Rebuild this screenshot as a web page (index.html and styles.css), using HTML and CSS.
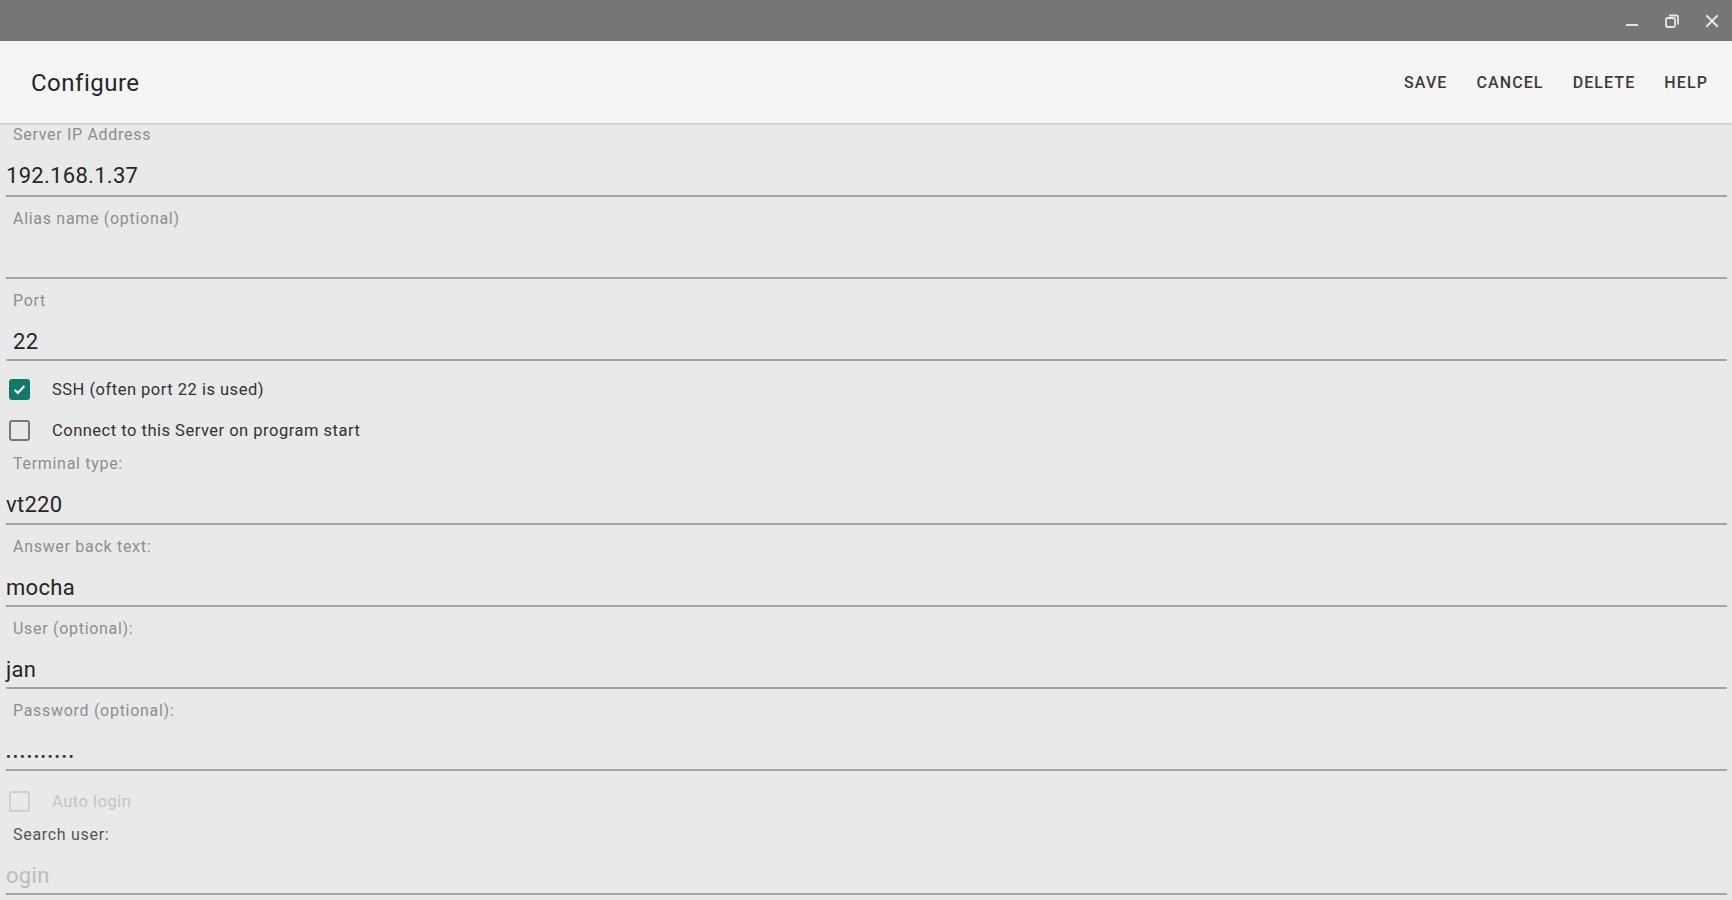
FILE: index.html
```html
<!DOCTYPE html>
<html>
<head>
<meta charset="utf-8">
<title>Configure</title>
<link rel="stylesheet" href="styles.css">
</head>
<body>
<div class="window">
  <div class="titlebar">
    <div class="winbtn">
      <svg width="16" height="16" viewBox="0 0 16 16"><rect x="2" y="11" width="12" height="2" fill="#e6e6e6"/></svg>
    </div>
    <div class="winbtn">
      <svg width="18" height="18" viewBox="0 0 18 18"><path d="M6 3.5h7.5a1.5 1.5 0 0 1 1.5 1.5v7.5" fill="none" stroke="#e6e6e6" stroke-width="1.8"/><rect x="3" y="6" width="9" height="9" rx="1.5" fill="none" stroke="#e6e6e6" stroke-width="1.8"/></svg>
    </div>
    <div class="winbtn">
      <svg width="16" height="16" viewBox="0 0 16 16"><path d="M3 3L13 13M13 3L3 13" stroke="#e6e6e6" stroke-width="2" stroke-linecap="square"/></svg>
    </div>
  </div>
  <div class="toolbar">
    <div class="title">Configure</div>
    <div class="actions">
      <span class="action">SAVE</span>
      <span class="action">CANCEL</span>
      <span class="action">DELETE</span>
      <span class="action">HELP</span>
    </div>
  </div>
  <div class="form">
    <div class="field first">
      <div class="label">Server IP Address</div>
      <div class="value">192.168.1.37</div>
    </div>
    <div class="field">
      <div class="label">Alias name (optional)</div>
      <div class="value"></div>
    </div>
    <div class="field">
      <div class="label">Port</div>
      <div class="value indent">22</div>
    </div>
    <div class="checks top">
      <div class="check"><span class="box checked"><svg width="15" height="15" viewBox="0 0 14 14"><path d="M2.5 7.2l3 3 6-6.5" fill="none" stroke="#fff" stroke-width="2"/></svg></span><span class="ctext">SSH (often port 22 is used)</span></div>
      <div class="check"><span class="box"></span><span class="ctext">Connect to this Server on program start</span></div>
    </div>
    <div class="field tight">
      <div class="label">Terminal type:</div>
      <div class="value">vt220</div>
    </div>
    <div class="field">
      <div class="label">Answer back text:</div>
      <div class="value">mocha</div>
    </div>
    <div class="field">
      <div class="label">User (optional):</div>
      <div class="value">jan</div>
    </div>
    <div class="field">
      <div class="label">Password (optional):</div>
      <div class="value dots">••••••••••</div>
    </div>
    <div class="checks">
      <div class="check disabled"><span class="box"></span><span class="ctext">Auto login</span></div>
    </div>
    <div class="field tighter">
      <div class="label dark">Search user:</div>
      <div class="value hint">ogin</div>
    </div>
  </div>
</div>
</body>
</html>
```
FILE: styles.css
```css
* { box-sizing: border-box; }
html, body { margin: 0; padding: 0; }
body {
  width: 1732px;
  height: 900px;
  overflow: hidden;
  font-family: Roboto, "Liberation Sans", sans-serif;
  background: #e9e9e9;
}
.window { display: flex; flex-direction: column; height: 900px; }
.titlebar {
  height: 41px;
  background: #767676;
  display: flex;
  justify-content: flex-end;
  align-items: center;
}
.winbtn {
  width: 40px;
  height: 41px;
  display: flex;
  align-items: center;
  justify-content: center;
}
.toolbar {
  height: 82px;
  background: #f5f5f5;
  display: flex;
  align-items: center;
  justify-content: space-between;
  padding: 0 24px 0 31px;
  box-shadow: 0 1px 2px rgba(0,0,0,0.18);
  position: relative;
  z-index: 1;
}
.title {
  font-size: 24px;
  color: #262626;
  letter-spacing: 0.5px;
  padding-top: 2px;
}
.actions { display: flex; gap: 29px; padding-top: 1px; }
.action {
  font-size: 16px;
  font-weight: 500;
  color: #3c3c3c;
  letter-spacing: 1.1px;
}
.form {
  flex: 1;
  background: #e9e9e9;
  padding: 0 5px 0 6px;
}
.field {
  padding-top: 14px;
  padding-bottom: 4px;
  border-bottom: 2px solid #a4a4a4;
}
.field.first { padding-top: 4px; padding-bottom: 6px; }
.field.tight { padding-top: 5px; padding-bottom: 5px; }
.field.tighter { padding-top: 5px; }
.label {
  height: 16px;
  line-height: 16px;
  font-size: 16px;
  color: #8e8e8e;
  padding-left: 7px;
  letter-spacing: 0.7px;
  white-space: nowrap;
}
.label.dark { color: #555555; }
.value {
  margin-top: 20px;
  height: 26px;
  line-height: 26px;
  font-size: 22px;
  color: #262626;
  letter-spacing: 0.3px;
}
.value.indent { padding-left: 7px; }
.value.hint { color: #bcbcbc; }
.value.dots {
  font-size: 13px;
  font-weight: 700;
  letter-spacing: 2.3px;
  color: #333;
  padding-top: 5px;
}
.checks { padding-top: 10px; }
.checks.top { padding-top: 8px; }
.check {
  height: 41px;
  display: flex;
  align-items: center;
  padding-left: 3px;
}
.box {
  width: 21px;
  height: 21px;
  border: 2px solid #777777;
  border-radius: 3px;
  display: flex;
  align-items: center;
  justify-content: center;
}
.box.checked { background: #11796a; border-color: #11796a; }
.ctext {
  margin-left: 22px;
  font-size: 16.5px;
  color: #333333;
  letter-spacing: 0.5px;
}
.check.disabled .box { border-color: #cfcfcf; }
.check.disabled .ctext { color: #c4c4c4; }
```
